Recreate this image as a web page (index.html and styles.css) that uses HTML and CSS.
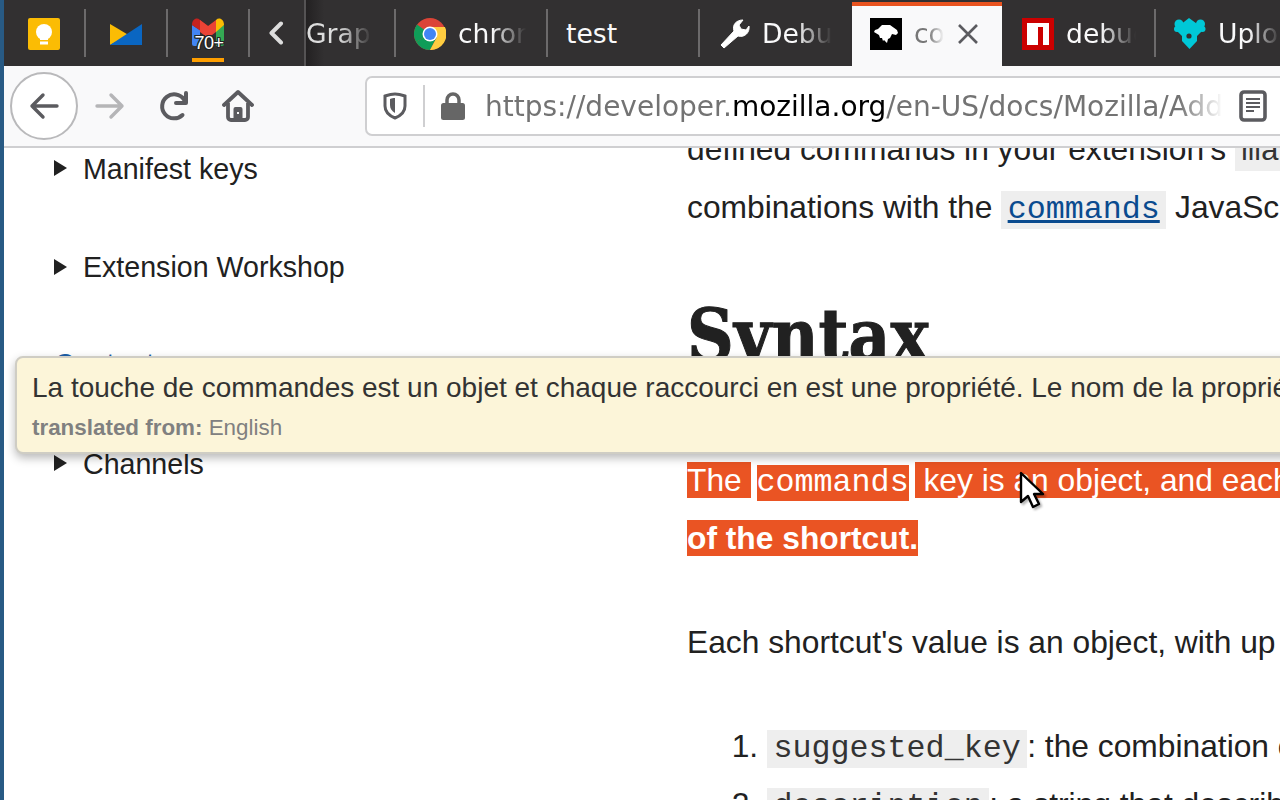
FILE: index.html
```html
<!DOCTYPE html>
<html lang="en">
<head>
<meta charset="utf-8">
<title>commands - Mozilla | MDN</title>
<link rel="stylesheet" href="styles.css">
</head>
<body>
<div class="window">
  <div class="strip"></div>
  <div class="browser">
    <div class="tabbar">
      <div class="tab pinned">
        <svg class="icon" viewBox="0 0 32 32"><rect width="32" height="32" rx="2" fill="#fbbc04"/><circle cx="16" cy="14" r="8" fill="#fff"/><rect x="12" y="18" width="8" height="4" fill="#fff"/><rect x="12" y="23.500" width="8" height="3" fill="#fff"/></svg>
      </div>
      <span class="sep"></span>
      <div class="tab pinned">
        <svg class="icon" viewBox="0 0 32 32"><polygon points="0,6 18.500,17 0,27" fill="#fbbc04"/><polygon points="32,6 32,27 0,27" fill="#0a66c2"/></svg>
      </div>
      <span class="sep"></span>
      <div class="tab pinned gmail">
        <svg class="icon" viewBox="0 0 32 32"><path d="M0 7v19a2 2 0 0 0 2 2h6V12z" fill="#4285f4"/><path d="M32 7v19a2 2 0 0 1-2 2h-6V12z" fill="#34a853"/><path d="M0 7C0 1 5-1 8 2l8 6v10L0 7z" fill="#c5221f"/><path d="M8 2l8 6 8-6v12l-8 6-8-6z" fill="#ea4335"/><path d="M24 2c3-3 8-1 8 5l-8 7z" fill="#fbbc04"/></svg>
        <span class="badge">70+</span>
        <span class="underline"></span>
      </div>
      <span class="sep"></span>
      <div class="chevron">
        <svg class="chev" viewBox="0 0 16 24"><path d="M13 2.500L3.500 12l9.500 9.500" fill="none" stroke="#ddd" stroke-width="4" stroke-linecap="round" stroke-linejoin="round"/></svg>
      </div>
      <span class="divider"></span>
      <div class="tab graph"><span class="label w-grap">Graph</span></div>
      <span class="sep"></span>
      <div class="tab wide">
        <svg class="icon" viewBox="0 0 32 32"><circle cx="16" cy="16" r="16" fill="#db4437"/><path d="M16 16L2.100 24A16 16 0 0 0 16 32h0l8-15z" fill="#0f9d58"/><path d="M2.100 24A16 16 0 0 1 3 6.500L16 16z" fill="#0f9d58"/><path d="M16 9h14.900A16 16 0 0 1 16 32l7-13z" fill="#ffcd40"/><circle cx="16" cy="16" r="7.500" fill="#fff"/><circle cx="16" cy="16" r="6" fill="#4285f4"/></svg>
        <span class="label w-chrome">chrome</span>
      </div>
      <span class="sep"></span>
      <div class="tab wide text-only"><span class="label w-test">test</span></div>
      <span class="sep"></span>
      <div class="tab wide debug">
        <svg class="icon" viewBox="0 0 32 32"><path d="M1 27L14 13c-2-6 2-11 9-11l-4 5 2 4 5 1 3-4c1 6-4 12-11 10L4 30z" fill="#fff" stroke="#fff" stroke-width="1" stroke-linejoin="round"/></svg>
        <span class="label w-debu">Debug</span>
      </div>
      <div class="tab active">
        <svg class="icon" viewBox="0 0 32 32"><rect width="32" height="32" fill="#000"/><polygon points="12,7 20,7 27,12 28,15 26,17 22,16 20,20 18,21 17,25 14,22 13,23 12,20 10,20 9,17 4,14 5,12 8,11" fill="#fff"/></svg>
        <span class="label w-co">commands</span>
        <svg class="close" viewBox="0 0 20 20"><path d="M1 1l18 18M19 1L1 19" stroke="#5b5b5f" stroke-width="2.600" fill="none"/></svg>
      </div>
      <div class="tab wide npm">
        <svg class="icon" viewBox="0 0 32 32"><rect width="32" height="32" fill="#cb0000"/><rect x="5" y="5" width="22" height="22" fill="#fff"/><rect x="16" y="9" width="5" height="18" fill="#cb0000"/></svg>
        <span class="label w-debu2">debug</span>
      </div>
      <span class="sep"></span>
      <div class="tab wide">
        <svg class="icon" viewBox="0 0 32 32"><polygon points="15,0 30,11 23,18 23,23 15.500,31 8,23 8,18 1,11" fill="#00c8d7"/><circle cx="5" cy="6" r="4.500" fill="#00c8d7"/><circle cx="26.500" cy="6" r="4.500" fill="#00c8d7"/><circle cx="3" cy="11" r="3" fill="#00c8d7"/><circle cx="28.500" cy="11" r="3" fill="#00c8d7"/><circle cx="15" cy="18" r="2.600" fill="#323031"/></svg>
        <span class="label w-uplo">Upload</span>
      </div>
    </div>

    <div class="toolbar">
      <div class="round-btn">
        <svg class="nav-icon" viewBox="0 0 32 32"><path d="M29 16H4M15 5L4 16l11 11" fill="none" stroke="#5b5b5f" stroke-width="3.400" stroke-linecap="round" stroke-linejoin="round"/></svg>
      </div>
      <svg class="nav-icon forward" viewBox="0 0 32 32"><path d="M3 16h25M17 5l11 11-11 11" fill="none" stroke="#b5b5b7" stroke-width="3.400" stroke-linecap="round" stroke-linejoin="round"/></svg>
      <svg class="nav-icon reload" viewBox="0 0 32 32"><path d="M23.500 25A12 12 0 1 1 25 9.500" fill="none" stroke="#5b5b5f" stroke-width="4" stroke-linecap="round"/><path d="M27 3v10H17" fill="none" stroke="#5b5b5f" stroke-width="4" stroke-linecap="round" stroke-linejoin="round"/></svg>
      <svg class="nav-icon home" viewBox="0 0 32 32"><path d="M2 15L16 2l14 13" fill="none" stroke="#5b5b5f" stroke-width="3.800" stroke-linecap="round" stroke-linejoin="round"/><path d="M6 13v14a3 3 0 0 0 3 3h14a3 3 0 0 0 3-3V13" fill="none" stroke="#5b5b5f" stroke-width="3.800"/><rect x="11.500" y="17" width="9" height="13" rx="2" fill="#5b5b5f"/><rect x="15" y="22" width="2" height="2" fill="#f9f9fa"/></svg>
      <div class="urlbar">
        <svg class="shield" viewBox="0 0 24 28"><path d="M12 2C8 2 5 3 2 4v10c0 6 5 10 10 12 5-2 10-6 10-12V4c-3-1-6-2-10-2z" fill="none" stroke="#5b5b5f" stroke-width="3"/><path d="M12 6v15c-3-2-5-4-5-8V7c2-1 3-1 5-1z" fill="#5b5b5f"/></svg>
        <span class="url-sep"></span>
        <svg class="lock" viewBox="0 0 24 28"><path d="M6 12V8a6 6 0 0 1 12 0v4" fill="none" stroke="#666" stroke-width="3.500"/><rect y="11" width="24" height="17" rx="2.500" fill="#666"/></svg>
        <span class="url">https://developer.<b class="domain">mozilla.org</b>/en-US/docs/Mozilla/Add-ons/WebExtensions</span>
        <svg class="reader" viewBox="0 0 28 32"><rect x="2" y="2" width="24" height="28" rx="3" fill="none" stroke="#5b5b5f" stroke-width="3.600"/><path d="M7 9h14M7 13h14M7 17h14M7 21h8" stroke="#5b5b5f" stroke-width="2"/></svg>
      </div>
    </div>

    <div class="page">
      <aside class="sidebar">
        <ul class="side-list">
          <li class="side-item"><span class="tri"></span>Manifest keys</li>
          <li class="side-item"><span class="tri"></span>Extension Workshop</li>
          <li class="side-item contrib">Contents</li>
          <li class="side-item"><span class="tri"></span>Channels</li>
        </ul>
      </aside>
      <main class="article">
        <p class="para">defined commands in your extension's <code class="code">manifest.json</code>. You can also get and set<br>combinations with the <code class="code"><a class="link" href="#">commands</a></code> JavaScript API.</p>
        <h2 class="title">Syntax</h2>
        <p class="para hl-para"><span class="hl">The </span><code class="hl-code">commands</code><span class="hl"> key is an object, and each shortcut is a property of it. The name of the property is the name</span><br><strong class="hl">of the shortcut.</strong></p>
        <p class="para">Each shortcut's value is an object, with up to 2 properties:</p>
        <ol class="list">
          <li><code class="code">suggested_key</code>: the combination of keys that activate the shortcut.</li>
          <li><code class="code">description</code>: a string that describes the shortcut.</li>
        </ol>
      </main>
    </div>
  </div>

  <div class="tooltip">
    <div class="tip-main">La touche de commandes est un objet et chaque raccourci en est une propriété. Le nom de la propriété est le nom du raccourci.</div>
    <div class="tip-sub"><b>translated from:</b> English</div>
  </div>

  <svg class="cursor" viewBox="0 0 26 40"><path d="M2 2v29l7-6 5 11 6-3-5-10h9z" fill="#fff" stroke="#000" stroke-width="2.400" stroke-linejoin="round"/></svg>
</div>
</body>
</html>
```
FILE: styles.css
```css
* { box-sizing: border-box; }
html, body { margin: 0; padding: 0; height: 100%; overflow: hidden; background: #fff; }
.window {
  position: relative;
  display: flex;
  width: 1280px;
  height: 800px;
  overflow: hidden;
  font-family: "Liberation Sans", Arial, sans-serif;
  color: #212121;
}
.strip { flex: 0 0 4px; background: #285a84; }
.browser { flex: 0 0 1276px; display: flex; flex-direction: column; min-width: 0; }

/* tabs */
.tabbar {
  flex: 0 0 66px;
  display: flex;
  align-items: center;
  background: #323031;
  font-family: "DejaVu Sans", sans-serif;
  font-size: 26.6px;
  color: #f9f9fa;
  overflow: hidden;
}
.tab {
  position: relative;
  flex: none;
  display: flex;
  align-items: center;
  height: 66px;
  gap: 12px;
}
.icon { flex: none; width: 32px; height: 32px; margin-top: 2px; }
.pinned { width: 80px; padding-left: 24px; }
.sep { flex: none; width: 2px; height: 48px; background: #6c6a6b; }
.gmail .underline { position: absolute; left: 24px; top: 58px; width: 32px; height: 4px; background: #ff9f00; }
.badge {
  position: absolute;
  left: 26px;
  top: 33px;
  width: 30px;
  text-align: center;
  font-family: "Liberation Sans", sans-serif;
  font-size: 18px;
  font-weight: 400;
  line-height: 20px;
  letter-spacing: -.5px;
  color: #fff;
  text-shadow: -1px 0 #222, 1px 0 #222, 0 -1px #222, 0 1px #222, -1px -1px #222, 1px 1px #222, 1px -1px #222, -1px 1px #222;
}
.chevron { flex: none; width: 54px; height: 66px; display: flex; align-items: center; padding-left: 18px; }
.chev { width: 16px; height: 24px; }
.divider { flex: none; width: 2px; height: 66px; background: #555354; }
.graph {
  width: 88px;
  padding-left: 0;
  background: linear-gradient(90deg, #232122, #323031 18px);
}
.wide { width: 150px; padding-left: 18px; }
.text-only { padding-left: 18px; }
.debug { width: 152px; padding-left: 20px; gap: 10px; }
.npm { width: 152px; padding-left: 20px; }
.label {
  display: block;
  overflow: hidden;
  white-space: nowrap;
  -webkit-mask-image: linear-gradient(90deg, #000 50%, transparent 100%);
  mask-image: linear-gradient(90deg, #000 50%, transparent 100%);
}
.w-grap { width: 66px; color: #ddd; }
.w-chrome { width: 68px; }
.w-test { width: 100px; -webkit-mask-image: none; mask-image: none; }
.w-debu { width: 70px; }
.w-co { width: 30px; color: #777; }
.w-debu2 { width: 70px; }
.w-uplo { width: 62px; }
.active {
  width: 150px;
  height: 64px;
  margin-top: 2px;
  padding: 0 0 6px 18px;
  gap: 12px;
  align-self: flex-start;
  background: #f9f9fa;
  border-top: 4px solid #e9531f;
}
.close { flex: none; width: 20px; height: 20px; margin-left: 2px; margin-top: 2px; }

/* toolbar */
.toolbar {
  flex: 0 0 82px;
  display: flex;
  align-items: center;
  padding: 0 0 0 6px;
  background: #f9f9fa;
  border-bottom: 2px solid #cfcfd1;
}
.round-btn {
  flex: none;
  display: flex;
  align-items: center;
  justify-content: center;
  width: 68px;
  height: 68px;
  border: 2px solid #b9b9bb;
  border-radius: 50%;
  background: #fff;
}
.nav-icon { flex: none; width: 32px; height: 32px; }
.forward { margin-left: 16px; }
.reload { margin-left: 33px; }
.home { margin-left: 31px; }
.urlbar {
  flex: none;
  display: flex;
  align-items: center;
  width: 960px;
  height: 60px;
  margin-left: 111px;
  padding-left: 16px;
  background: #fff;
  border: 2px solid #cfcfd1;
  border-radius: 7px;
  overflow: hidden;
}
.shield { flex: none; width: 24px; height: 28px; }
.url-sep { flex: none; width: 2px; height: 42px; margin-left: 16px; background: #cfcfd1; }
.lock { flex: none; width: 24px; height: 28px; margin-left: 16px; }
.url {
  flex: none;
  width: 738px;
  margin-left: 20px;
  overflow: hidden;
  white-space: nowrap;
  font-family: "DejaVu Sans", sans-serif;
  font-size: 28px;
  color: #737373;
  -webkit-mask-image: linear-gradient(90deg, #000 94%, transparent 100%);
  mask-image: linear-gradient(90deg, #000 94%, transparent 100%);
}
.domain { font-weight: 400; color: #000; }
.reader { flex: none; width: 28px; height: 32px; margin-left: 16px; }

/* page */
.page { flex: 1; display: flex; min-height: 0; overflow: hidden; background: #fff; }
.sidebar { flex: 0 0 683px; }
.side-list { list-style: none; margin: -28px 0 0; padding: 0 0 0 50px; font-size: 28.6px; }
.side-item { display: flex; align-items: center; gap: 16px; height: 98.400px; }
.tri {
  flex: none;
  width: 0;
  height: 0;
  margin-top: -2px;
  border-left: 13px solid #212121;
  border-top: 8px solid transparent;
  border-bottom: 8px solid transparent;
}
.contrib { color: #1c5fa8; padding-bottom: 3px; }
.article { flex: 1; min-width: 0; margin-top: -28px; font-size: 31.75px; line-height: 58px; white-space: nowrap; overflow: hidden; }
.para { margin: 0; }
.code {
  font-family: "Liberation Mono", monospace;
  font-size: 31.7px;
  line-height: 0;
  padding: 1px 6.500px;
  background: #eee;
  color: #333;
}
.link { color: #0a4b8f; }
.title {
  margin: 60px 0 0;
  font-family: "DejaVu Serif Condensed", "DejaVu Serif", serif;
  font-stretch: condensed;
  font-size: 72px;
  font-weight: 700;
  line-height: 80px;
  height: 155px;
  -webkit-text-stroke: 1px #212121;
}
.hl { background: #ea5423; color: #fff; }
.hl-code {
  font-family: "Liberation Mono", monospace;
  font-size: 31.7px;
  line-height: 0;
  margin: 0 6px;
  background: #ea5423;
  color: #fff;
}
.hl-para { margin-bottom: 46px; }
.list { margin: 46px 0 0; padding: 0 0 0 80px; }

/* tooltip */
.tooltip {
  position: absolute;
  left: 15px;
  top: 356px;
  width: 1400px;
  height: 98px;
  padding: 15px 0 0 15px;
  background: #fcf5d9;
  border: 2px solid #cfcdc4;
  border-radius: 8px;
  box-shadow: 0 4px 10px rgba(0, 0, 0, .28);
  white-space: nowrap;
}
.tip-main { font-size: 28px; line-height: 30px; color: #333; }
.tip-sub { margin-top: 11px; font-size: 22.4px; line-height: 28px; color: #808080; }

.cursor { position: absolute; left: 1019px; top: 471px; width: 26px; height: 40px; filter: drop-shadow(2px 2px 1px rgba(0,0,0,.3)); }
```
